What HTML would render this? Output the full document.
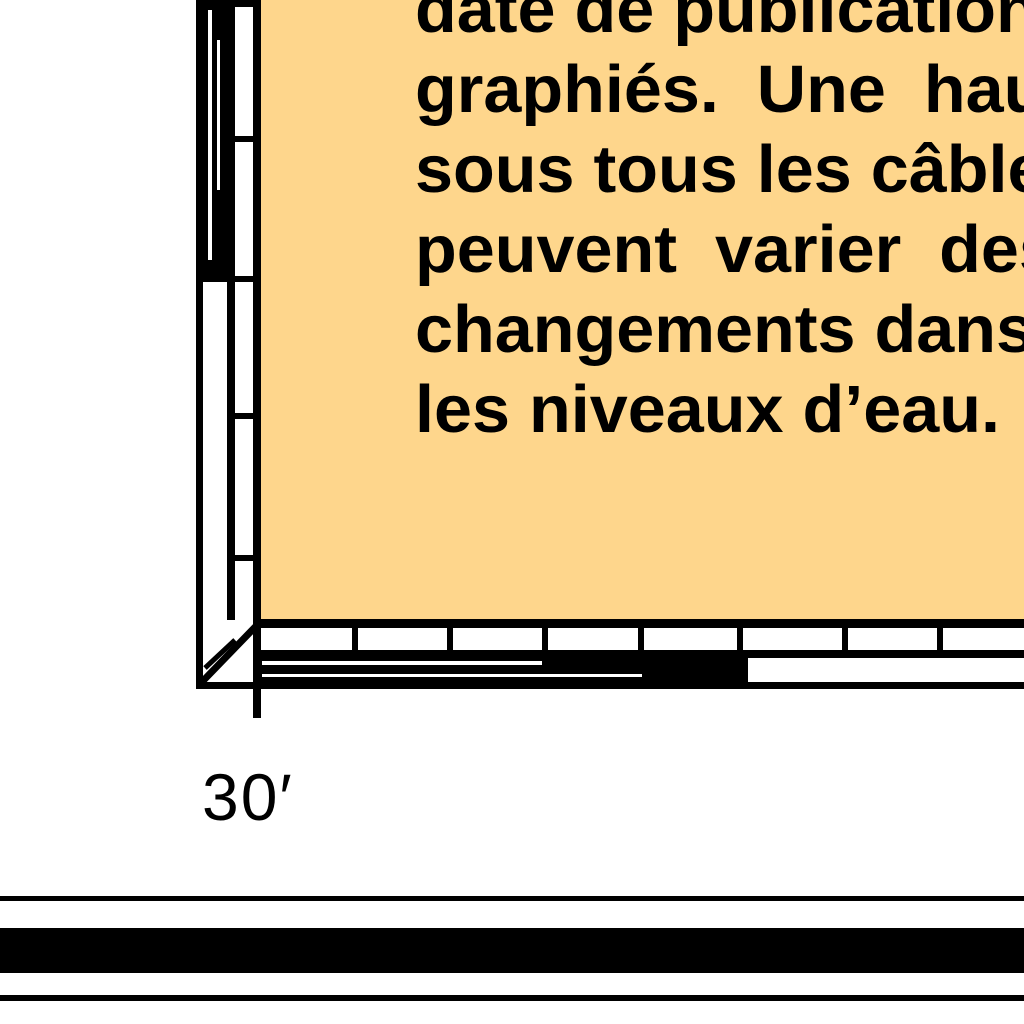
<!DOCTYPE html>
<html><head><meta charset="utf-8"><style>
html,body{margin:0;padding:0;background:#fff;width:1024px;height:1024px;overflow:hidden;position:relative}
.b{position:absolute;background:#000}
.o{position:absolute;left:258px;top:0;width:766px;height:621px;background:#fed68c;overflow:hidden}
.t{position:absolute;left:157px;font-family:"Liberation Sans",sans-serif;font-weight:bold;font-size:67px;line-height:1;white-space:nowrap;transform:scaleX(1.02);transform-origin:left top;color:#000}
</style></head><body>
<div class="o">
<div class="t" style="top:-24px">date de publication</div>
<div class="t" style="top:56px">graphiés.&nbsp; Une&nbsp; haute</div>
<div class="t" style="top:136px">sous tous les câbles</div>
<div class="t" style="top:216px">peuvent&nbsp; varier&nbsp; des</div>
<div class="t" style="top:296px">changements dans</div>
<div class="t" style="top:376px">les niveaux d’eau.</div>
</div>

<div class="b" style="left:196px;top:0;width:7px;height:688px"></div>
<div class="b" style="left:203px;top:0;width:25px;height:278px;background:#000"></div>
<div class="b" style="left:208px;top:10px;width:4px;height:250px;background:#fff"></div>
<div class="b" style="left:217px;top:40px;width:3px;height:150px;background:#fff"></div>
<div class="b" style="left:227px;top:0;width:8px;height:620px"></div>
<div class="b" style="left:253px;top:0;width:8px;height:718px"></div>
<div class="b" style="left:235px;top:0;width:18px;height:7px"></div>
<div class="b" style="left:235px;top:136px;width:18px;height:6px"></div>
<div class="b" style="left:203px;top:276px;width:50px;height:6px"></div>
<div class="b" style="left:235px;top:413px;width:18px;height:6px"></div>
<div class="b" style="left:235px;top:555px;width:18px;height:6px"></div>
<svg style="position:absolute;left:0;top:0" width="1024" height="1024"><line x1="200" y1="684" x2="258" y2="624" stroke="#000" stroke-width="7"/><line x1="205" y1="668" x2="235" y2="640" stroke="#000" stroke-width="5"/></svg>
<div class="b" style="left:253px;top:619px;width:771px;height:9px"></div>
<div class="b" style="left:253px;top:650px;width:771px;height:8px"></div>
<div class="b" style="left:258px;top:658px;width:490px;height:24px"></div>
<div class="b" style="left:262px;top:661px;width:280px;height:4px;background:#fff"></div>
<div class="b" style="left:262px;top:674px;width:380px;height:3px;background:#fff"></div>
<div class="b" style="left:196px;top:682px;width:828px;height:7px"></div>
<div class="b" style="left:352px;top:628px;width:6px;height:22px"></div>
<div class="b" style="left:447px;top:628px;width:6px;height:22px"></div>
<div class="b" style="left:542px;top:628px;width:6px;height:22px"></div>
<div class="b" style="left:638px;top:628px;width:6px;height:22px"></div>
<div class="b" style="left:737px;top:628px;width:6px;height:22px"></div>
<div class="b" style="left:842px;top:628px;width:6px;height:22px"></div>
<div class="b" style="left:937px;top:628px;width:6px;height:22px"></div>

<div style="position:absolute;left:202px;top:764px;font-family:'Liberation Sans',sans-serif;font-size:66px;letter-spacing:2px;line-height:1;color:#000">30′</div>

<div class="b" style="left:0;top:896px;width:1024px;height:5px"></div>
<div class="b" style="left:0;top:928px;width:1024px;height:45px"></div>
<div class="b" style="left:0;top:995px;width:1024px;height:6px"></div>
</body></html>
